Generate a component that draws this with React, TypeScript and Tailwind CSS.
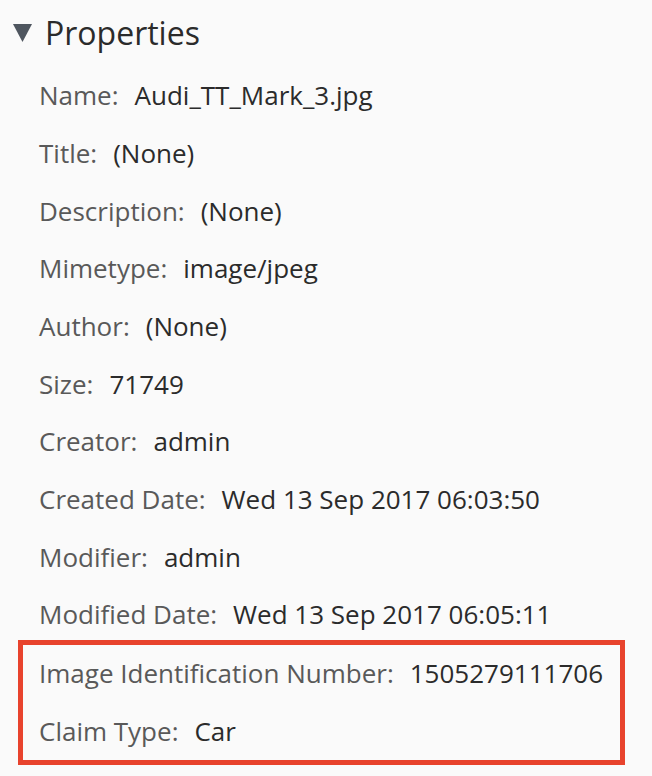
import React from "react"

const rows: [string, string][] = [
  ["Name", "Audi_TT_Mark_3.jpg"],
  ["Title", "(None)"],
  ["Description", "(None)"],
  ["Mimetype", "image/jpeg"],
  ["Author", "(None)"],
  ["Size", "71749"],
  ["Creator", "admin"],
  ["Created Date", "Wed 13 Sep 2017 06:03:50"],
  ["Modifier", "admin"],
  ["Modified Date", "Wed 13 Sep 2017 06:05:11"],
]

const custom: [string, string][] = [
  ["Image Identification Number", "1505279111706"],
  ["Claim Type", "Car"],
]

function Row({ label, value }: { label: string; value: string }) {
  return (
    <div className="flex h-[57.67px] items-center whitespace-nowrap text-[26px]">
      <span className="text-[#595959]">{label}:</span>
      <span className="ml-[16px] text-[#2b2b2b]">{value}</span>
    </div>
  )
}

export default function App() {
  return (
    <div
      className="min-h-screen w-full bg-[#fafafa]"
      style={{ fontFamily: '"Open Sans", "Noto Sans", sans-serif' }}
    >
      <div className="flex h-[67px] items-center pl-[13px] pb-[1px]">
        <svg width="19" height="18" viewBox="0 0 19 18">
          <polygon points="0,0 19,0 9.5,18" fill="#4f565f" />
        </svg>
        <span className="ml-[13px] text-[32px] text-[#2b2b2b]">Properties</span>
      </div>

      <div className="pl-[39px]">
        {rows.map(([l, v]) => (
          <Row key={l} label={l} value={v} />
        ))}
      </div>

      <div className="ml-[18px] -mt-[4px] w-[607px] border-[5px] border-[#e8432d] pl-[16px]">
        {custom.map(([l, v]) => (
          <Row key={l} label={l} value={v} />
        ))}
      </div>
    </div>
  )
}
